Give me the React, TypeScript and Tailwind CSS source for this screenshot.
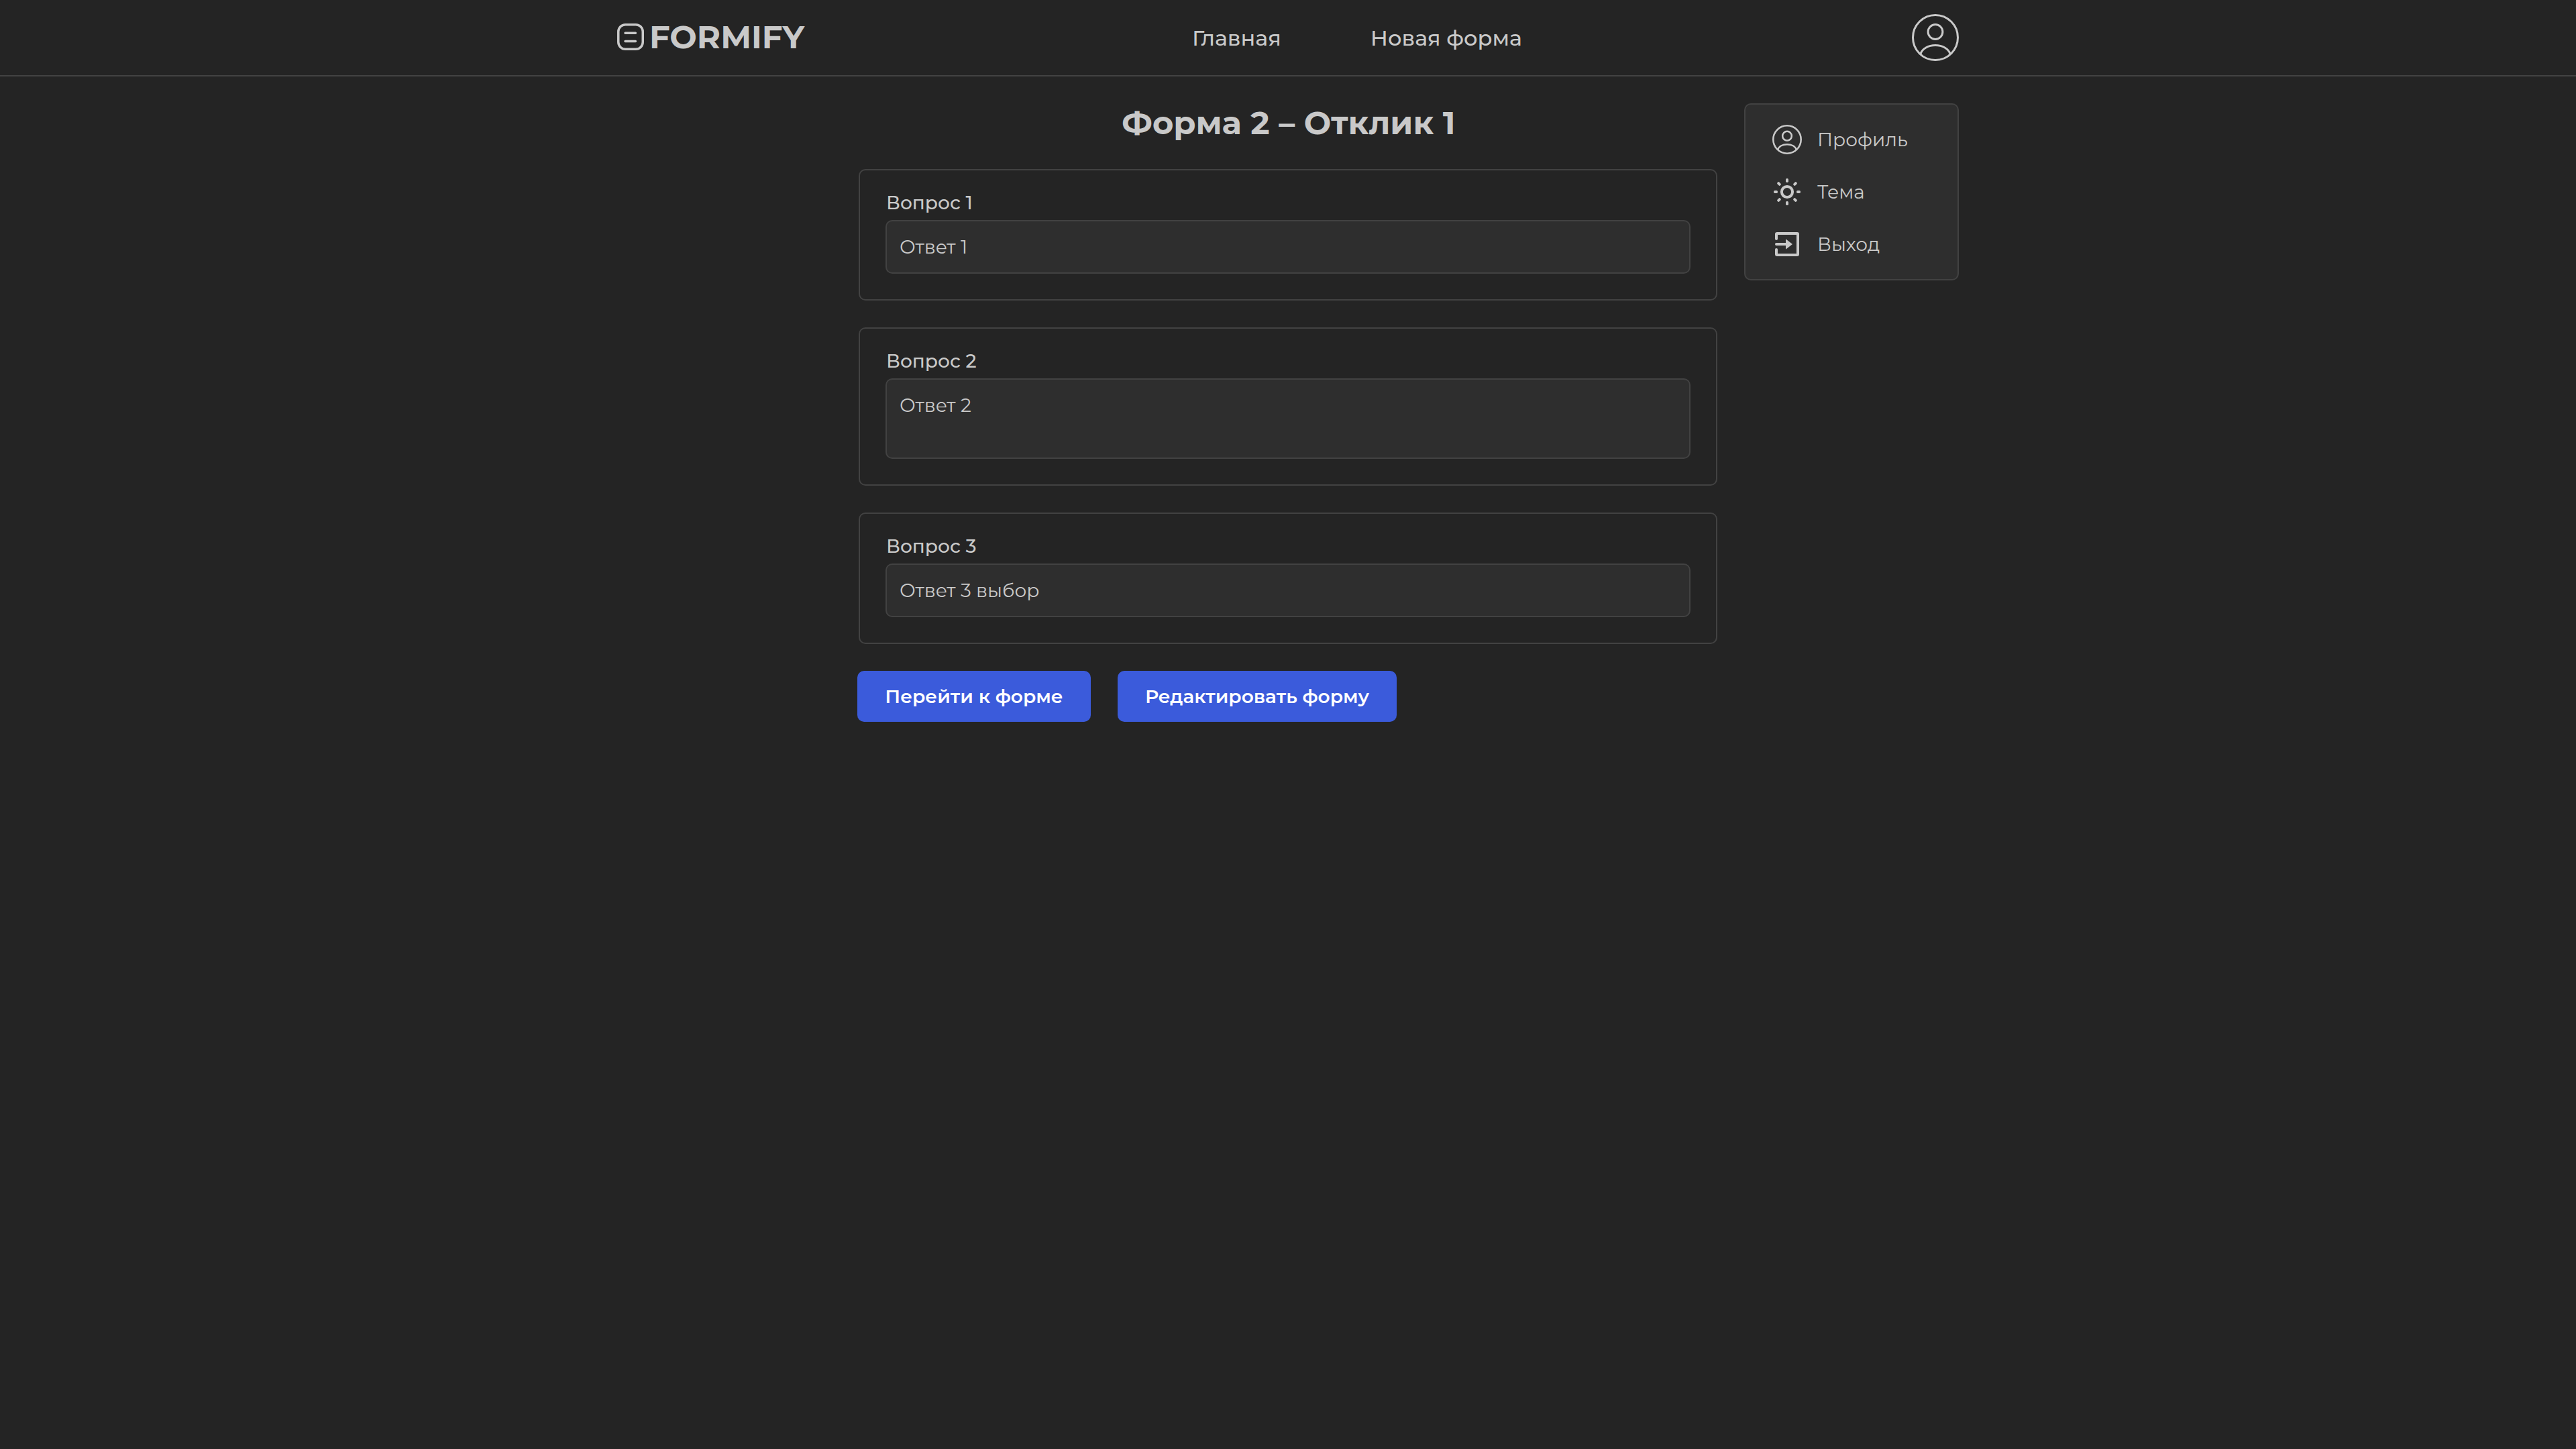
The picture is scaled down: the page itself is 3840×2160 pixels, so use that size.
type Question = { label: string; answer: string; multiline?: boolean };

const questions: Question[] = [
  { label: 'Вопрос 1', answer: 'Ответ 1' },
  { label: 'Вопрос 2', answer: 'Ответ 2', multiline: true },
  { label: 'Вопрос 3', answer: 'Ответ 3 выбор' },
];

function LogoIcon() {
  return (
    <svg className="size-10 shrink-0" viewBox="0 0 40 40" fill="none" stroke="currentColor" strokeWidth="3.5" strokeLinecap="round">
      <rect x="1.75" y="1.75" width="36.5" height="36.5" rx="10.5" />
      <path d="M12 14.2h15.4M12 26.4h15.4" />
    </svg>
  );
}

function UserIcon({ className, strokeWidth }: { className: string; strokeWidth: number }) {
  return (
    <svg className={className} viewBox="-35 -35 70 70" fill="none" stroke="currentColor" strokeWidth={strokeWidth}>
      <circle r={35 - strokeWidth / 2} />
      <circle cy="-8.5" r="10.9" />
      <path d="M-22.2 24.5C-19.5 16.5-10.5 11.6 0 11.6S19.5 16.5 22.2 24.5" />
    </svg>
  );
}

function SunIcon() {
  return (
    <svg className="size-12" viewBox="-24 -24 48 48" fill="currentColor">
      <circle r="8.1" fill="none" stroke="currentColor" strokeWidth="4" />
      {[0, 45, 90, 135, 180, 225, 270, 315].map((angle) => (
        <rect key={angle} x="-2" y="-20" width="4" height="6" rx="1.7" transform={`rotate(${angle})`} />
      ))}
    </svg>
  );
}

function ExitIcon() {
  return (
    <svg className="size-12" viewBox="0 0 48 48" fill="none" stroke="currentColor" strokeWidth="4" strokeLinecap="round" strokeLinejoin="round">
      <path d="M8 16V9a1 1 0 0 1 1-1h30a1 1 0 0 1 1 1v30a1 1 0 0 1-1 1H9a1 1 0 0 1-1-1v-7" />
      <path d="M8 24h16" />
      <path d="M22 16.3v15.4L32 24z" fill="currentColor" stroke="none" />
    </svg>
  );
}

function Header() {
  return (
    <header className="h-[114px] border-b-2 border-[#424242]">
      <div className="mx-auto flex h-full w-[2000px] items-center">
        <a className="mb-0.5 flex w-[857px] items-center gap-2 text-[48px] leading-[58px] font-bold">
          <LogoIcon />
          FORMIFY
        </a>
        <nav className="flex gap-[133px] pt-0.5 text-[32px] leading-10 font-medium">
          <a>Главная</a>
          <a>Новая форма</a>
        </nav>
        <button className="ml-auto">
          <UserIcon className="size-[70px]" strokeWidth={3} />
        </button>
      </div>
    </header>
  );
}

function QuestionCard({ label, answer, multiline }: Question) {
  return (
    <section className="rounded-[10px] border-2 border-[#424242] px-[38px] pt-[30px] pb-[38px]">
      <h2 className="mb-2 pl-px leading-9 font-medium">{label}</h2>
      <div
        className={`rounded-[10px] border-2 border-[#424242] bg-[#2e2e2e] px-[19px] py-5 leading-9 ${multiline ? 'h-[120px]' : 'h-20'}`}
      >
        {answer}
      </div>
    </section>
  );
}

function UserMenu() {
  return (
    <aside className="flex h-[264px] w-80 flex-col gap-[30px] rounded-[10px] border-2 border-[#424242] bg-[#2e2e2e] px-[38px] py-7">
      <a className="flex items-center gap-[21px]">
        <span className="flex size-12 items-center justify-center">
          <UserIcon className="size-11" strokeWidth={4.1} />
        </span>
        Профиль
      </a>
      <a className="flex items-center gap-[21px]">
        <SunIcon />
        Тема
      </a>
      <a className="flex items-center gap-[21px]">
        <ExitIcon />
        Выход
      </a>
    </aside>
  );
}

function Button({ className, children }: { className: string; children: string }) {
  return (
    <button className={`h-[76px] rounded-[10px] bg-[#3b5bdb] leading-9 font-semibold text-white ${className}`}>{children}</button>
  );
}

export default function App() {
  return (
    <div className="min-h-screen bg-[#242424] font-['Montserrat',Inter,sans-serif] text-[28px] leading-9 text-[#c9c9c9]">
      <Header />
      <div className="mx-auto flex w-[2000px] items-start gap-10 pt-10">
        <main className="ml-[360px] flex w-[1280px] flex-col gap-10">
          <h1 className="pl-0.5 text-center text-[48px] leading-[58px] font-bold">Форма 2 – Отклик 1</h1>
          {questions.map((question) => (
            <QuestionCard key={question.label} {...question} />
          ))}
          <div className="-ml-0.5 flex gap-10">
            <Button className="w-[348px]">Перейти к форме</Button>
            <Button className="w-[416px]">Редактировать форму</Button>
          </div>
        </main>
        <UserMenu />
      </div>
    </div>
  );
}
